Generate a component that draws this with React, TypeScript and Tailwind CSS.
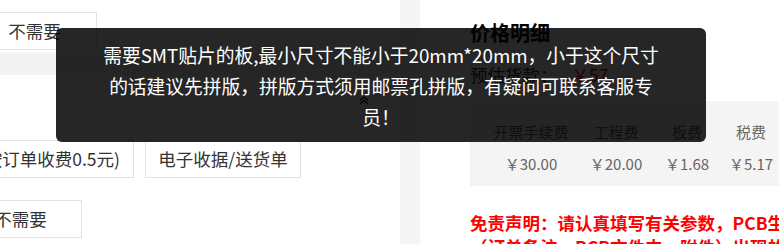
const font = { fontFamily: '"Noto Sans CJK SC", "Noto Sans", sans-serif' }

const fees = [
  { label: "开票手续费", value: "￥30.00", w: "w-[98px]" },
  { label: "工程费", value: "￥20.00", w: "w-[72px]" },
  { label: "板费", value: "￥1.68", w: "w-[70px]" },
  { label: "税费", value: "￥5.17", w: "w-[58px]" },
]

const OptionBox = ({ children, className = "" }: { children: React.ReactNode; className?: string }) => (
  <div
    className={`shrink-0 h-[38px] flex items-center justify-center whitespace-nowrap border border-[#e2e2e2] bg-white text-[#333] text-[17.5px] ${className}`}
  >
    {children}
  </div>
)

export default function App() {
  return (
    <div className="relative w-[779px] h-[244px] overflow-hidden bg-white flex" style={font}>
      {/* Left: order options */}
      <div className="w-[400px] shrink-0 flex flex-col">
        <div className="mt-[12px] flex">
          <OptionBox className="-ml-[28px] w-[125px]">不需要</OptionBox>
        </div>
        <div className="mt-[3px] h-[22px] bg-[#f3f3f3]" />

        <div className="mt-[65px] w-[301px] flex justify-end gap-[11px]">
          <OptionBox className="px-[13px]">纸质收据(按订单收费0.5元)</OptionBox>
          <OptionBox className="w-[156px]">电子收据/送货单</OptionBox>
        </div>

        <div className="mt-[22px] flex">
          <OptionBox className="-ml-[41px] w-[123px]">不需要</OptionBox>
        </div>
      </div>

      {/* Divider */}
      <div className="w-[20px] shrink-0 bg-[#f5f5f5]" />

      {/* Right: price detail */}
      <div className="flex-1 min-w-0 flex flex-col">
        <div className="ml-[31px] h-[3px] bg-[#f4f4f4]" />
        <div className="pl-[50px] flex flex-col">
          <h2 className="mt-[19px] text-[20px] leading-[28px] font-bold text-black">价格明细</h2>
          <p className="mt-[16px] text-[17.5px] leading-[24px] text-[#333] whitespace-nowrap">
            预估货款：<span className="ml-[14px] text-[#e60012]">￥57</span>
          </p>

          <div className="mt-[14px] h-[85px] bg-[#f4f4f4] pl-[12px] flex">
            {fees.map(f => (
              <div key={f.label} className={`${f.w} shrink-0 flex flex-col items-center pt-[19px] text-[15px] leading-[24px] text-[#666] whitespace-nowrap`}>
                <span>{f.label}</span>
                <span className="mt-[8px]">{f.value}</span>
              </div>
            ))}
          </div>

          <div className="mt-[25px] text-[17.5px] leading-[24px] font-bold text-[#ff0000] whitespace-nowrap">
            <p>免责声明：请认真填写有关参数，PCB生产将以此为准</p>
            <p>（订单备注、PCB文件中、附件）出现的参数不作为依据</p>
          </div>
        </div>
      </div>

      {/* Tooltip */}
      <div className="absolute left-[56px] top-[28px] w-[650px] h-[114px] rounded-[6px] bg-black/85 pt-[11px] text-center text-white text-[18.75px] leading-[31px]">
        需要SMT贴片的板,最小尺寸不能小于20mm*20mm，小于这个尺寸
        <br />
        的话建议先拼版，拼版方式须用邮票孔拼版，有疑问可联系客服专
        <br />
        员！
      </div>

      {/* small cursor mark */}
      <svg className="absolute left-[359px] top-[96px]" width="10" height="9" viewBox="0 0 10 9" fill="none">
        <polyline points="1,4.5 5,1 9,4.5" stroke="#000" strokeWidth="1.3" />
        <polyline points="1,8 5,4.5 9,8" stroke="#000" strokeWidth="1.3" />
      </svg>
    </div>
  )
}
